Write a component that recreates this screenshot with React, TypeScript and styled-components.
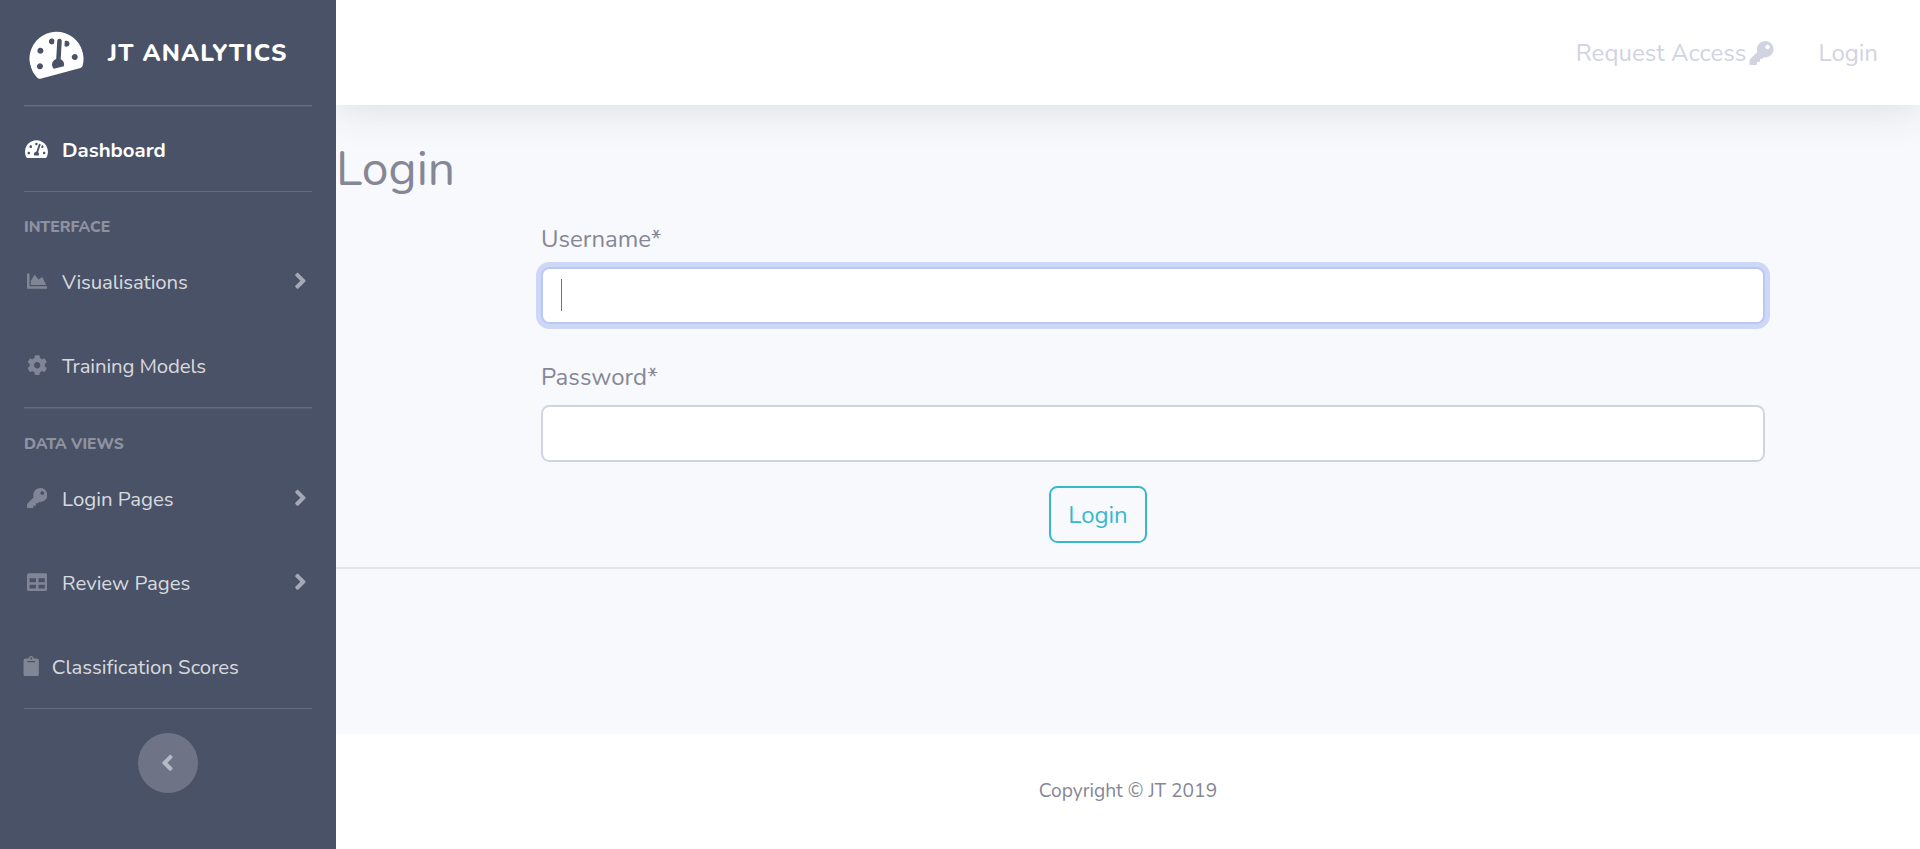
import React from 'react';
import styled, { createGlobalStyle } from 'styled-components';
import {
  FaTachometerAlt, FaChartArea, FaCog, FaKey, FaTable, FaClipboard, FaAngleRight, FaAngleLeft,
} from 'react-icons/fa';

const GlobalStyle = createGlobalStyle`
  *, *::before, *::after { box-sizing: border-box; }
  body {
    margin: 0;
    background: #fff;
    color: #858796;
    font: 400 24px/36px Nunito, Lato, "Open Sans", sans-serif;
    overflow: hidden;
  }
`;

const Page = styled.div`
  display: flex;
  height: 849px;
`;

const Sidebar = styled.nav`
  width: 336px;
  flex: none;
  padding: 0 24px;
  background: #4a5267;
  position: relative;
  z-index: 1;
`;

const Brand = styled.a`
  display: flex;
  align-items: center;
  height: 105px;
  padding-left: 4px;
  color: #fff;
  font-weight: 800;
  svg { width: 54px; height: 48px; flex: none; transform: rotate(-15deg); }
`;

const BrandText = styled.span`
  margin-left: 26px;
  white-space: nowrap;
  letter-spacing: 1.2px;
`;

const Divider = styled.hr<{ $thick?: boolean }>`
  margin: 0;
  border: 0;
  height: ${p => (p.$thick ? 2 : 1)}px;
  background: linear-gradient(rgba(255, 255, 255, .15) 1px, rgba(255, 255, 255, .07) 1px);
`;

const SectionTitle = styled.div`
  margin-top: 23px;
  height: 24px;
  font-size: 15.6px;
  line-height: 24px;
  font-weight: 800;
  color: rgba(255, 255, 255, .4);
`;

const Item = styled.a<{ $active?: boolean }>`
  display: flex;
  align-items: center;
  height: 84px;
  font-size: 20.4px;
  line-height: 30px;
  font-weight: ${p => (p.$active ? 700 : 400)};
  color: ${p => (p.$active ? '#fff' : 'rgba(255, 255, 255, .8)')};
`;

const ItemIcon = styled.span<{ $narrow?: boolean; $active?: boolean }>`
  display: flex;
  flex: none;
  justify-content: center;
  width: ${p => (p.$narrow ? 15.3 : 25.5)}px;
  margin-right: 12.5px;
  color: ${p => (p.$active ? '#fff' : 'rgba(255, 255, 255, .3)')};
  svg { flex: none; height: 20.4px; width: ${p => (p.$active ? 22.95 : 20.4)}px; }
`;

const ItemLabel = styled.span<{ $spacing?: number }>`
  padding-top: 1px;
  white-space: nowrap;
  letter-spacing: ${p => p.$spacing ?? 0}px;
`;

const Arrow = styled.span`
  display: flex;
  margin: 0 5px 1px auto;
  color: rgba(255, 255, 255, .5);
  svg { height: 25.6px; width: 12.8px; }
`;

const Toggle = styled.button`
  display: flex;
  align-items: center;
  justify-content: center;
  width: 60px;
  height: 60px;
  margin: 24px auto 0;
  padding: 0 2px 0 0;
  border: 0;
  border-radius: 50%;
  background: rgba(255, 255, 255, .2);
  color: rgba(255, 255, 255, .5);
  svg { height: 25.6px; width: 12.8px; }
`;

const Main = styled.div`
  display: flex;
  flex-direction: column;
  flex: 1;
  background: #f8f9fc;
`;

const Topbar = styled.header`
  display: flex;
  flex: none;
  align-items: center;
  justify-content: flex-end;
  height: 105px;
  padding-right: 42px;
  background: #fff;
  box-shadow: 0 3.6px 42px rgba(58, 59, 69, .15);
  color: #d1d3e2;
`;

const TopLink = styled.a<{ $spacing?: number }>`
  display: flex;
  align-items: center;
  margin-left: 44px;
  letter-spacing: ${p => p.$spacing ?? 0}px;
  svg { width: 25px; height: 24px; margin-left: 3px; }
`;

const Title = styled.h2`
  margin: 35px 0 13px;
  font-size: 48px;
  line-height: 58px;
  font-weight: 400;
`;

const Form = styled.form`
  display: flex;
  flex-direction: column;
  width: 1224px;
  margin-left: 205px;
`;

const FieldLabel = styled.label`
  height: 36px;
  margin: 10px 0;
`;

const Field = styled.div<{ $focused?: boolean }>`
  display: flex;
  align-items: center;
  height: 57px;
  margin-bottom: 25px;
  padding: 0 18px;
  border: 2px solid ${p => (p.$focused ? '#bac8f3' : '#d1d3e2')};
  border-radius: 8.4px;
  background: #fff;
  box-shadow: ${p => (p.$focused ? '0 0 0 5px rgba(78, 115, 223, .25)' : 'none')};
`;

const Caret = styled.span`
  flex: none;
  width: 1px;
  height: 32px;
  margin-bottom: 1px;
  background: #6e707e;
`;

const Input = styled.input`
  flex: 1;
  min-width: 0;
  padding: 0;
  border: 0;
  outline: 0;
  background: transparent;
  color: #6e707e;
  font: inherit;
`;

const Submit = styled.button`
  width: 98px;
  height: 57px;
  margin: -1px 0 24px 508px;
  padding: 0;
  border: 2px solid #36b9cc;
  border-radius: 8.4px;
  background: transparent;
  color: #36b9cc;
  font: inherit;
`;

const Rule = styled.hr`
  width: 100%;
  height: 2px;
  margin: 0;
  border: 0;
  background: #e4e5ef;
`;

const Footer = styled.footer`
  display: flex;
  align-items: center;
  justify-content: center;
  height: 115px;
  margin-top: auto;
  padding-bottom: 2px;
  background: #fff;
  font-size: 19.2px;
`;

export default function App() {
  return (
    <Page>
      <GlobalStyle />
      <Sidebar>
        <Brand>
          <FaTachometerAlt />
          <BrandText>JT ANALYTICS</BrandText>
        </Brand>
        <Divider $thick />
        <Item $active>
          <ItemIcon $active><FaTachometerAlt /></ItemIcon>
          <ItemLabel>Dashboard</ItemLabel>
        </Item>
        <Divider />
        <SectionTitle>INTERFACE</SectionTitle>
        <Item>
          <ItemIcon><FaChartArea /></ItemIcon>
          <ItemLabel $spacing={-0.12}>Visualisations</ItemLabel>
          <Arrow><FaAngleRight /></Arrow>
        </Item>
        <Item>
          <ItemIcon><FaCog /></ItemIcon>
          <ItemLabel $spacing={-0.12}>Training Models</ItemLabel>
        </Item>
        <Divider $thick />
        <SectionTitle>DATA VIEWS</SectionTitle>
        <Item>
          <ItemIcon><FaKey /></ItemIcon>
          <ItemLabel>Login Pages</ItemLabel>
          <Arrow><FaAngleRight /></Arrow>
        </Item>
        <Item>
          <ItemIcon><FaTable /></ItemIcon>
          <ItemLabel>Review Pages</ItemLabel>
          <Arrow><FaAngleRight /></Arrow>
        </Item>
        <Item>
          <ItemIcon $narrow><FaClipboard /></ItemIcon>
          <ItemLabel $spacing={-0.03}>Classification Scores</ItemLabel>
        </Item>
        <Divider />
        <Toggle type="button" aria-label="Collapse sidebar"><FaAngleLeft /></Toggle>
      </Sidebar>
      <Main>
        <Topbar>
          <TopLink $spacing={0.07}>Request Access<FaKey /></TopLink>
          <TopLink>Login</TopLink>
        </Topbar>
        <Title>Login</Title>
        <Form>
          <FieldLabel htmlFor="username">Username*</FieldLabel>
          <Field $focused><Caret /><Input id="username" /></Field>
          <FieldLabel htmlFor="password">Password*</FieldLabel>
          <Field><Input id="password" type="password" /></Field>
          <Submit type="button">Login</Submit>
        </Form>
        <Rule />
        <Footer>Copyright © JT 2019</Footer>
      </Main>
    </Page>
  );
}
